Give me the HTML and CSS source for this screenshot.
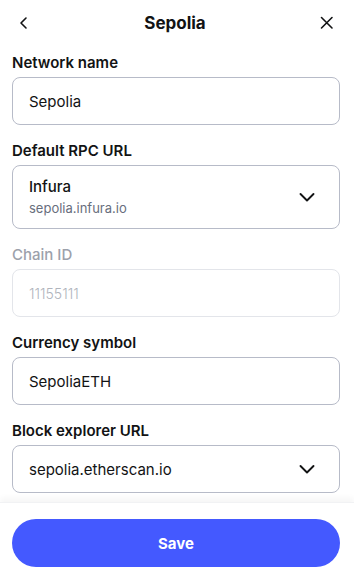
FILE: index.html
```html
<!DOCTYPE html>
<html lang="en">
<head>
    <meta charset="UTF-8">
    <meta name="viewport" content="width=device-width, initial-scale=1.0">
    <title>Sepolia</title>
    <link rel="stylesheet" href="styles.css">
</head>
<body>
    <div class="page">
        <div class="header">
            <button class="icon-btn">
                <svg width="16" height="16" viewBox="0 0 16 16"><path d="M11 3 L6 8 L11 13" /></svg>
            </button>
            <div class="header-title">Sepolia</div>
            <button class="icon-btn">
                <svg width="16" height="16" viewBox="0 0 16 16"><path d="M2.5 2.5 L13 13 M13 2.5 L2.5 13" /></svg>
            </button>
        </div>

        <div class="form">
            <div class="field">
                <div class="label">Network name</div>
                <div class="input">Sepolia</div>
            </div>

            <div class="field">
                <div class="label">Default RPC URL</div>
                <div class="input select tall">
                    <div class="select-text">
                        <div class="select-main">Infura</div>
                        <div class="select-sub">sepolia.infura.io</div>
                    </div>
                    <svg class="chevron" width="16" height="16" viewBox="0 0 16 16"><path d="M1.5 5 L8 11.5 L14.5 5" /></svg>
                </div>
            </div>

            <div class="field disabled">
                <div class="label">Chain ID</div>
                <div class="input">11155111</div>
            </div>

            <div class="field">
                <div class="label">Currency symbol</div>
                <div class="input">SepoliaETH</div>
            </div>

            <div class="field">
                <div class="label">Block explorer URL</div>
                <div class="input select">
                    <div class="select-text">sepolia.etherscan.io</div>
                    <svg class="chevron" width="16" height="16" viewBox="0 0 16 16"><path d="M1.5 5 L8 11.5 L14.5 5" /></svg>
                </div>
            </div>
        </div>

        <div class="footer">
            <button class="save-btn">Save</button>
        </div>
    </div>
</body>
</html>
```

FILE: styles.css
```css
* {
    margin: 0;
    padding: 0;
    box-sizing: border-box;
}

body {
    font-family: Inter, 'Noto Sans', sans-serif;
    background: #fff;
    color: #121314;
    width: 354px;
    height: 579px;
    overflow: hidden;
}

.page {
    display: flex;
    flex-direction: column;
    height: 579px;
}

.header {
    display: flex;
    align-items: center;
    justify-content: space-between;
    height: 46px;
    padding: 0 19px 0 15px;
}

.icon-btn {
    background: none;
    border: none;
    width: 16px;
    height: 16px;
    display: flex;
}

.icon-btn path,
.chevron path {
    fill: none;
    stroke: #121314;
    stroke-width: 1.6;
    stroke-linecap: round;
    stroke-linejoin: round;
}

.chevron path {
    stroke-width: 1.9;
}

.header-title {
    font-size: 17px;
    font-weight: 700;
}

.form {
    flex: 1;
    padding: 7px 14px 0 12px;
    display: flex;
    flex-direction: column;
    gap: 16px;
}

.label {
    font-size: 15px;
    font-weight: 600;
    line-height: 20px;
    margin-bottom: 4px;
}

.input {
    height: 48px;
    border: 1px solid #b7bbc8;
    border-radius: 8px;
    padding: 0 16px;
    display: flex;
    align-items: center;
    font-size: 15px;
}

.input.tall {
    height: 64px;
}

.select {
    justify-content: space-between;
}

.select-main {
    font-size: 15px;
    font-weight: 500;
    line-height: 22px;
}

.select-sub {
    font-size: 13px;
    color: #686e7d;
    line-height: 20px;
}

.chevron {
    margin-right: 8px;
}

.disabled .label {
    color: #9ca1ab;
    font-weight: 500;
}

.disabled .input {
    border-color: #e3e5ea;
    color: #b0b4bc;
    font-size: 14px;
    font-weight: 300;
}

.footer {
    padding: 16px 14px 12px 12px;
    box-shadow: 0 -4px 6px rgba(0, 0, 0, 0.04);
    border-top: 1px solid #f1f2f4;
}

.save-btn {
    width: 100%;
    height: 48px;
    border: none;
    border-radius: 24px;
    background: #4459ff;
    color: #fff;
    font-family: inherit;
    font-size: 15px;
    font-weight: 700;
}
```
